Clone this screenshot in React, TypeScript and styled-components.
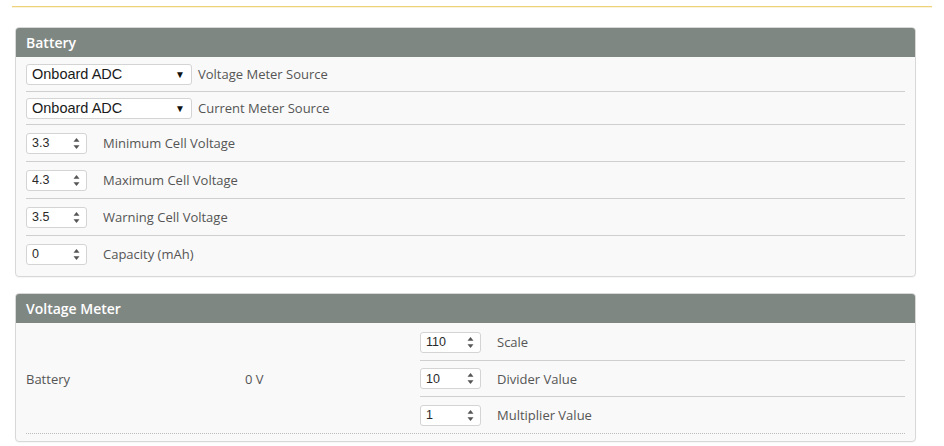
import React from "react";
import styled, { createGlobalStyle } from "styled-components";

const Global = createGlobalStyle`
  html, body { margin: 0; padding: 0; background: #ffffff; }
  body { font-family: "Open Sans", "Liberation Sans", sans-serif; }
  * { box-sizing: border-box; }
`;

const Page = styled.div`
  width: 944px;
  height: 446px;
  overflow: hidden;
  padding: 6px 12px 0 12px;
`;

const Rule = styled.div`
  height: 2px;
  width: 920px;
  border-top: 1px solid #ecd27a;
  border-bottom: 1px solid #fbf3da;
`;

const Content = styled.div`
  width: 901px;
  margin-left: 3px;
  padding-top: 19px;
  display: flex;
  flex-direction: column;
  gap: 16px;
`;

const Panel = styled.section`
  border: 1px solid #d8d8d8;
  border-radius: 4px;
  background: #f9f9f9;
  overflow: hidden;
  box-shadow: 0 1px 1px rgba(0, 0, 0, 0.04);
`;

const PanelHeader = styled.div`
  height: 29px;
  background: #7f8783;
  color: #ffffff;
  font-size: 14px;
  font-weight: 600;
  display: flex;
  align-items: center;
  padding-left: 10px;
`;

const PanelBody = styled.div<{ $pb?: number }>`
  padding: 0 10px ${(p) => p.$pb ?? 0}px 10px;
`;

const Row = styled.div<{ $h: number; $last?: boolean }>`
  height: ${(p) => p.$h}px;
  display: flex;
  align-items: center;
  border-bottom: ${(p) => (p.$last ? "none" : "1px solid #cfcfcf")};
`;

const Select = styled.div`
  width: 166px;
  height: 21px;
  background: #ffffff;
  border: 1px solid #d4d4d4;
  border-radius: 3px;
  display: flex;
  align-items: center;
  justify-content: space-between;
  padding: 0 6px 0 5px;
  font-family: "Liberation Sans", Arial, sans-serif;
  font-size: 14.5px;
  color: #1a1a1a;
`;

const Caret = styled.span`
  font-size: 10px;
  color: #111;
`;

const Label = styled.span<{ $gap: number }>`
  margin-left: ${(p) => p.$gap}px;
  font-size: 13px;
  color: #555;
`;

const Spinner = styled.div`
  width: 61px;
  height: 21px;
  background: #ffffff;
  border: 1px solid #d4d4d4;
  border-radius: 3px;
  display: flex;
  align-items: center;
  justify-content: space-between;
  padding: 0 6px 0 5px;
  font-family: "Liberation Sans", Arial, sans-serif;
  font-size: 12.5px;
  color: #2a2a2a;
`;

const Arrows = () => (
  <svg width="7" height="13" viewBox="0 0 7 13">
    <path d="M3.5 1 L6.5 4.8 L0.5 4.8 Z" fill="#555" />
    <path d="M3.5 12 L6.5 8.2 L0.5 8.2 Z" fill="#555" />
  </svg>
);

const MeterGrid = styled.div`
  display: grid;
  grid-template-columns: 219px 175px 1fr;
  padding-top: 1px;
  border-bottom: 1px dotted #bdbdbd;
`;

const MeterCell = styled.div`
  display: flex;
  align-items: center;
  font-size: 13px;
  color: #555;
`;

const MeterStack = styled.div`
  display: flex;
  flex-direction: column;
`;

const sources = ["Voltage Meter Source", "Current Meter Source"];
const cells = [
  { v: "3.3", l: "Minimum Cell Voltage" },
  { v: "4.3", l: "Maximum Cell Voltage" },
  { v: "3.5", l: "Warning Cell Voltage" },
  { v: "0", l: "Capacity (mAh)" },
];
const meter = [
  { v: "110", l: "Scale" },
  { v: "10", l: "Divider Value" },
  { v: "1", l: "Multiplier Value" },
];

export default function App() {
  return (
    <>
      <Global />
      <Page>
        <Rule />
        <Content>
          <Panel>
            <PanelHeader>Battery</PanelHeader>
            <PanelBody $pb={4}>
              {sources.map((s, i) => (
                <Row key={s} $h={i === 0 ? 35 : 33}>
                  <Select>
                    <span>Onboard ADC</span>
                    <Caret>▼</Caret>
                  </Select>
                  <Label $gap={6}>{s}</Label>
                </Row>
              ))}
              {cells.map((c, i) => (
                <Row key={c.l} $h={i === 3 ? 36 : 37} $last={i === 3}>
                  <Spinner>
                    <span>{c.v}</span>
                    <Arrows />
                  </Spinner>
                  <Label $gap={16}>{c.l}</Label>
                </Row>
              ))}
            </PanelBody>
          </Panel>
          <Panel>
            <PanelHeader>Voltage Meter</PanelHeader>
            <PanelBody $pb={7}>
              <MeterGrid>
                <MeterCell>Battery</MeterCell>
                <MeterCell>0 V</MeterCell>
                <MeterStack>
                  {meter.map((m, i) => (
                    <Row key={m.l} $h={i === 0 ? 37 : 36} $last={i === 2}>
                      <Spinner>
                        <span>{m.v}</span>
                        <Arrows />
                      </Spinner>
                      <Label $gap={16}>{m.l}</Label>
                    </Row>
                  ))}
                </MeterStack>
              </MeterGrid>
            </PanelBody>
          </Panel>
        </Content>
      </Page>
    </>
  );
}
